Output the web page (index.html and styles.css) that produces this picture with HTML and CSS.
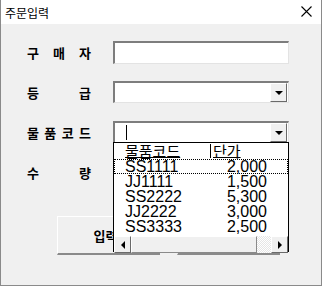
FILE: index.html
```html
<!DOCTYPE html>
<html lang="ko">
<head>
    <meta charset="UTF-8">
    <meta name="viewport" content="width=device-width, initial-scale=1.0">
    <title>주문입력</title>
    <link rel="stylesheet" href="styles.css">
</head>
<body>
    <div class="window">
        <div class="titlebar">
            <span class="title">주문입력</span>
            <svg class="close" width="11" height="11" viewBox="0 0 11 11">
                <path d="M0.5 0.5 L10.5 10.5 M10.5 0.5 L0.5 10.5" stroke="#000" stroke-width="1.1" fill="none"/>
            </svg>
        </div>

        <div class="content">
            <div class="row">
                <label class="label"><span>구</span><span>매</span><span>자</span></label>
                <div class="textbox"></div>
            </div>
            <div class="row">
                <label class="label"><span>등</span><span>급</span></label>
                <div class="combo">
                    <span class="drop-btn"><span class="arrow-down"></span></span>
                </div>
            </div>
            <div class="row">
                <label class="label"><span>물</span><span>품</span><span>코</span><span>드</span></label>
                <div class="combo">
                    <span class="caret"></span>
                    <span class="drop-btn"><span class="arrow-down"></span></span>
                </div>
            </div>
            <div class="row">
                <label class="label"><span>수</span><span>량</span></label>
                <div class="textbox"></div>
            </div>

            <div class="buttons">
                <button class="btn">입력</button>
                <button class="btn">닫기</button>
            </div>

            <div class="droplist">
                <div class="list-head">
                    <span class="col-code">물품코드</span>
                    <span class="col-sep"></span>
                    <span class="col-price">단가</span>
                </div>
                <div class="list-row focused"><span class="col-code">SS1111</span><span class="col-num">2,000</span></div>
                <div class="list-row"><span class="col-code">JJ1111</span><span class="col-num">1,500</span></div>
                <div class="list-row"><span class="col-code">SS2222</span><span class="col-num">5,300</span></div>
                <div class="list-row"><span class="col-code">JJ2222</span><span class="col-num">3,000</span></div>
                <div class="list-row"><span class="col-code">SS3333</span><span class="col-num">2,500</span></div>
                <div class="hscroll">
                    <span class="sb-btn"><span class="arrow-left"></span></span>
                    <span class="sb-thumb"></span>
                    <span class="sb-track"></span>
                    <span class="sb-btn"><span class="arrow-right"></span></span>
                </div>
            </div>
        </div>
    </div>
</body>
</html>
```

FILE: styles.css
```css
body {
    margin: 0;
    font-family: "Noto Sans CJK KR", "Liberation Sans", sans-serif;
    background: #fff;
}

.window {
    width: 322px;
    height: 286px;
    box-sizing: border-box;
    border: 1px solid #8a8a8a;
    border-top: none;
    background: #f0f0f0;
    display: flex;
    flex-direction: column;
}

.titlebar {
    height: 24px;
    background: #fff;
    display: flex;
    align-items: center;
    justify-content: space-between;
    padding: 0 9px 0 4px;
}

.title {
    font-size: 12px;
    color: #000;
}

.close {
    margin-bottom: 1px;
}

.content {
    position: relative;
    flex: 1;
    padding: 8px 0 0 26px;
}

.row {
    height: 40px;
    display: flex;
    align-items: center;
}

.label {
    width: 64px;
    margin-right: 22px;
    display: flex;
    justify-content: space-between;
    font-size: 13px;
    font-weight: 600;
    color: #000;
}

.textbox,
.combo {
    width: 176px;
    box-sizing: border-box;
    background: #fff;
    border-top: 2px solid #7d7d7d;
    border-left: 2px solid #7d7d7d;
    border-right: 1px solid #e3e3e3;
    border-bottom: 1px solid #e3e3e3;
}

.textbox {
    height: 23px;
}

.combo {
    height: 22px;
    position: relative;
    display: flex;
    align-items: center;
}

.caret {
    width: 1px;
    height: 15px;
    background: #000;
    margin-left: 11px;
}

.drop-btn {
    position: absolute;
    right: 1px;
    top: 0;
    width: 17px;
    height: 19px;
    box-sizing: border-box;
    background: #f0f0f0;
    border-top: 1px solid #fff;
    border-left: 1px solid #fff;
    border-right: 1px solid #6a6a6a;
    border-bottom: 1px solid #6a6a6a;
    display: flex;
    align-items: center;
    justify-content: center;
}

.arrow-down {
    width: 0;
    height: 0;
    border-left: 4px solid transparent;
    border-right: 4px solid transparent;
    border-top: 4px solid #000;
    margin-top: 1px;
}

.buttons {
    display: flex;
    gap: 17px;
    margin: 24px 0 0 30px;
}

.btn {
    width: 103px;
    height: 39px;
    box-sizing: border-box;
    background: #f0f0f0;
    border: none;
    border-top: 1px solid #fff;
    border-left: 1px solid #fff;
    border-right: 1px solid #8a8a8a;
    border-bottom: 2px solid #8a8a8a;
    font-family: "Noto Sans CJK KR", sans-serif;
    font-size: 13px;
    font-weight: 600;
    color: #000;
    padding: 0 6px 0 0;
}

.droplist {
    position: absolute;
    left: 112px;
    top: 118px;
    width: 176px;
    height: 110px;
    box-sizing: border-box;
    background: #fff;
    border: 1px solid #000;
    font-family: "Liberation Sans", Arial, sans-serif;
    font-size: 16px;
    color: #000;
}

.list-head {
    height: 16px;
    display: flex;
    align-items: flex-end;
    font-family: "Noto Sans CJK KR", sans-serif;
    font-size: 15px;
    line-height: 16px;
}

.list-head .col-code {
    width: 85px;
    margin-left: 11px;
    text-decoration: underline;
    text-underline-offset: 0;
}

.col-sep {
    width: 1px;
    height: 14px;
    background: #000;
    align-self: flex-start;
    margin-top: 1px;
}

.col-price {
    margin-left: 2px;
    text-decoration: underline;
    text-underline-offset: 0;
}

.list-row {
    height: 15px;
    line-height: 15px;
    display: flex;
    justify-content: space-between;
    padding: 0 21px 0 11px;
}

.list-row.focused {
    outline: 1px dotted #000;
    outline-offset: -1px;
}

.hscroll {
    display: flex;
    height: 17px;
    margin-top: 2px;
}

.sb-btn {
    width: 17px;
    box-sizing: border-box;
    background: #f0f0f0;
    border-top: 1px solid #fff;
    border-left: 1px solid #fff;
    border-right: 1px solid #6a6a6a;
    border-bottom: 1px solid #6a6a6a;
    display: flex;
    align-items: center;
    justify-content: center;
}

.sb-thumb {
    width: 126px;
    box-sizing: border-box;
    background: #f0f0f0;
    border-top: 1px solid #fff;
    border-left: 1px solid #fff;
    border-right: 1px solid #8a8a8a;
    border-bottom: 1px solid #8a8a8a;
}

.sb-track {
    flex: 1;
    background: repeating-conic-gradient(#fff 0 25%, #e6e6e6 0 50%) 0 0 / 2px 2px;
}

.arrow-left {
    width: 0;
    height: 0;
    border-top: 4px solid transparent;
    border-bottom: 4px solid transparent;
    border-right: 4px solid #000;
}

.arrow-right {
    width: 0;
    height: 0;
    border-top: 4px solid transparent;
    border-bottom: 4px solid transparent;
    border-left: 4px solid #000;
}
```
